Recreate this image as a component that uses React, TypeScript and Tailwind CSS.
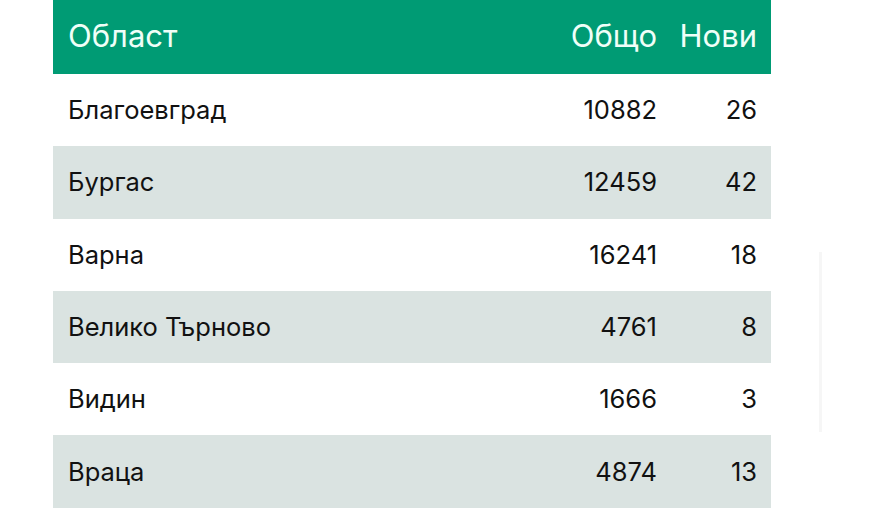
import React from "react";

const rows = [
  { name: "Благоевград", total: 10882, fresh: 26 },
  { name: "Бургас", total: 12459, fresh: 42 },
  { name: "Варна", total: 16241, fresh: 18 },
  { name: "Велико Търново", total: 4761, fresh: 8 },
  { name: "Видин", total: 1666, fresh: 3 },
  { name: "Враца", total: 4874, fresh: 13 },
];

export default function App() {
  return (
    <div
      lang="bg"
      className="relative w-[884px] h-[509px] bg-white overflow-hidden"
      style={{ fontFamily: "Inter, 'Noto Sans', sans-serif" }}
    >
      <div className="ml-[53px] w-[718px]">
        <div className="flex items-center h-[74px] bg-[#009b74] text-[#effff8] text-[31px] pl-[15px] pr-[14px] pb-[2px]">
          <div className="flex-1">Област</div>
          <div className="w-[120px] text-right">Общо</div>
          <div className="w-[100px] text-right">Нови</div>
        </div>
        {rows.map((r, i) => (
          <div
            key={r.name}
            className={
              "flex items-center h-[72.3px] text-[25.5px] text-[#111] pl-[15px] pr-[14px] " +
              (i % 2 === 1 ? "bg-[#dae3e1]" : "bg-white")
            }
          >
            <div className="flex-1">{r.name}</div>
            <div className="w-[120px] text-right">{r.total}</div>
            <div className="w-[100px] text-right">{r.fresh}</div>
          </div>
        ))}
      </div>
      <div className="absolute left-[819px] top-[252px] w-[3px] h-[180px] bg-[#f6f6f6]" />
    </div>
  );
}
